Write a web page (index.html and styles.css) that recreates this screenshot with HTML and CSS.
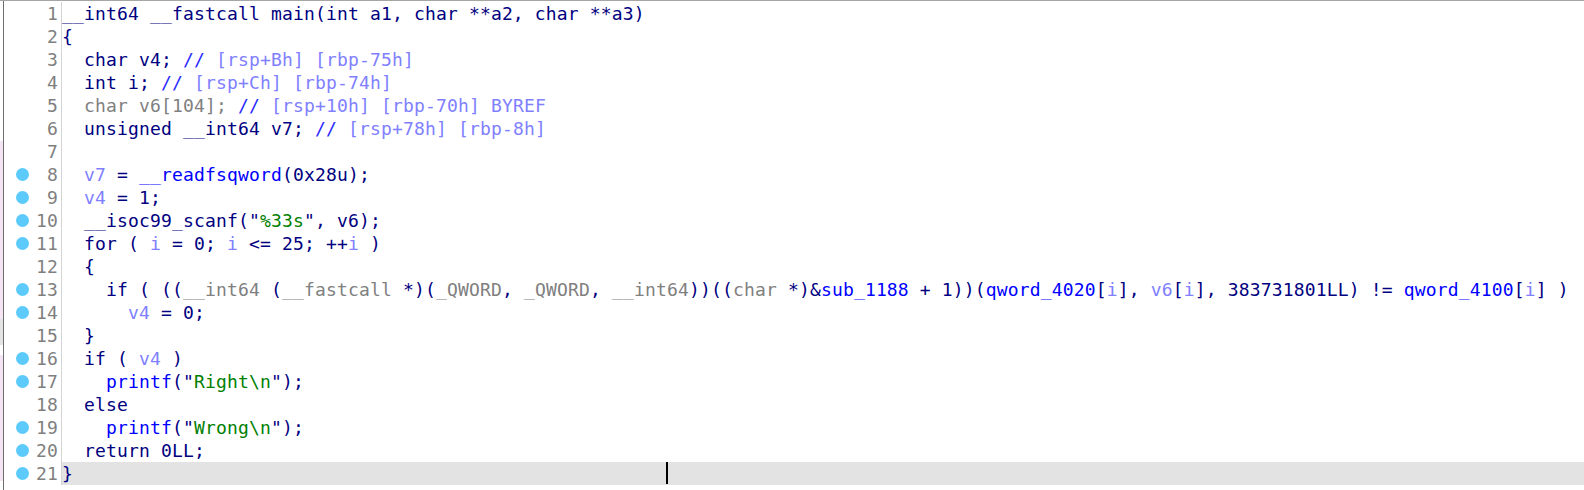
FILE: index.html
```html
<!DOCTYPE html>
<html>
    <head>
        <title>Pseudocode-A</title>
        <link rel="stylesheet" href="styles.css">
    </head>
    <body>
        <div class='window'>
            <div class='edge'>
                <div class='band white' style='height: 140px'></div>
                <div class='band pink' style='height: 178px'></div>
                <div class='band grey' style='height: 26px'></div>
                <div class='band white' style='height: 10px'></div>
                <div class='band pink' style='height: 126px'></div>
            </div>
            <div class='editor'>
                <div class='line'><span class='gutter'><span class='num'>1</span></span><span class='code'>__int64 __fastcall main(int a1, char **a2, char **a3)</span></div>
                <div class='line'><span class='gutter'><span class='num'>2</span></span><span class='code'>{</span></div>
                <div class='line'><span class='gutter'><span class='num'>3</span></span><span class='code'>  char v4; <span class='cs'>//</span><span class='c'> [rsp+Bh] [rbp-75h]</span></span></div>
                <div class='line'><span class='gutter'><span class='num'>4</span></span><span class='code'>  int i; <span class='cs'>//</span><span class='c'> [rsp+Ch] [rbp-74h]</span></span></div>
                <div class='line'><span class='gutter'><span class='num'>5</span></span><span class='code'>  <span class='g'>char v6[104];</span> <span class='cs'>//</span><span class='c'> [rsp+10h] [rbp-70h] BYREF</span></span></div>
                <div class='line'><span class='gutter'><span class='num'>6</span></span><span class='code'>  unsigned __int64 v7; <span class='cs'>//</span><span class='c'> [rsp+78h] [rbp-8h]</span></span></div>
                <div class='line'><span class='gutter'><span class='num'>7</span></span><span class='code'></span></div>
                <div class='line'><span class='gutter'><span class='dot'></span><span class='num'>8</span></span><span class='code'>  <span class='v'>v7</span> = <span class='f'>__readfsqword</span>(0x28u);</span></div>
                <div class='line'><span class='gutter'><span class='dot'></span><span class='num'>9</span></span><span class='code'>  <span class='v'>v4</span> = 1;</span></div>
                <div class='line'><span class='gutter'><span class='dot'></span><span class='num'>10</span></span><span class='code'>  __isoc99_scanf("<span class='s'>%33s</span>", v6);</span></div>
                <div class='line'><span class='gutter'><span class='dot'></span><span class='num'>11</span></span><span class='code'>  for ( <span class='v'>i</span> = 0; <span class='v'>i</span> &lt;= 25; ++<span class='v'>i</span> )</span></div>
                <div class='line'><span class='gutter'><span class='num'>12</span></span><span class='code'>  {</span></div>
                <div class='line'><span class='gutter'><span class='dot'></span><span class='num'>13</span></span><span class='code'>    if ( ((<span class='g'>__int64</span> (<span class='g'>__fastcall</span> *)(<span class='g'>_QWORD</span>, <span class='g'>_QWORD</span>, <span class='g'>__int64</span>))((<span class='g'>char</span> *)&amp;<span class='f'>sub_1188</span> + 1))(<span class='f'>qword_4020</span>[<span class='v'>i</span>], <span class='v'>v6</span>[<span class='v'>i</span>], 383731801LL) != <span class='f'>qword_4100</span>[<span class='v'>i</span>] )</span></div>
                <div class='line'><span class='gutter'><span class='dot'></span><span class='num'>14</span></span><span class='code'>      <span class='v'>v4</span> = 0;</span></div>
                <div class='line'><span class='gutter'><span class='num'>15</span></span><span class='code'>  }</span></div>
                <div class='line'><span class='gutter'><span class='dot'></span><span class='num'>16</span></span><span class='code'>  if ( <span class='v'>v4</span> )</span></div>
                <div class='line'><span class='gutter'><span class='dot'></span><span class='num'>17</span></span><span class='code'>    <span class='f'>printf</span>("<span class='s'>Right\n</span>");</span></div>
                <div class='line'><span class='gutter'><span class='num'>18</span></span><span class='code'>  else</span></div>
                <div class='line'><span class='gutter'><span class='dot'></span><span class='num'>19</span></span><span class='code'>    <span class='f'>printf</span>("<span class='s'>Wrong\n</span>");</span></div>
                <div class='line'><span class='gutter'><span class='dot'></span><span class='num'>20</span></span><span class='code'>  return 0LL;</span></div>
                <div class='line current'><span class='gutter'><span class='dot'></span><span class='num'>21</span></span><span class='code'>}<span class='caret'></span></span></div>
            </div>
        </div>
    </body>
</html>
```

FILE: styles.css
```css
* {
    margin: 0;
    padding: 0;
    box-sizing: border-box;
}

body {
    background: white;
    font-family: "DejaVu Sans Mono", monospace;
    font-size: 18px;
    letter-spacing: 0.16px;
    color: #000080;
    overflow: hidden;
}

.window {
    display: flex;
    height: 490px;
    border-top: 1px solid #a6a6a6;
}

.edge {
    width: 4px;
    border-right: 1px solid #6e6e6e;
    display: flex;
    flex-direction: column;
}

.band.white {
    background: white;
}

.band.pink {
    background: #f4e4f4;
}

.band.grey {
    background: #e4e4e4;
}

.editor {
    flex: 1;
    padding-top: 1px;
}

.line {
    display: flex;
    height: 23px;
    line-height: 23px;
}

.gutter {
    width: 58px;
    display: flex;
    align-items: center;
    justify-content: flex-end;
    padding-right: 3px;
    border-right: 1px solid #d4d4d4;
    position: relative;
}

.num {
    color: #7f7f7f;
}

.dot {
    position: absolute;
    left: 12px;
    top: 5px;
    width: 13px;
    height: 13px;
    border-radius: 50%;
    background: #5ccbfc;
}

.code {
    flex: 1;
    white-space: pre;
    position: relative;
}

.current .code {
    background: #e3e3e3;
}

.caret {
    position: absolute;
    left: 604px;
    top: 0;
    width: 2px;
    height: 22px;
    background: black;
}

.v {
    color: #7f7fff;
}

.f {
    color: #0000ff;
}

.s {
    color: #008000;
}

.g {
    color: #808080;
}

.cs {
    color: #2a2aff;
}

.c {
    color: #8080ff;
}
```
